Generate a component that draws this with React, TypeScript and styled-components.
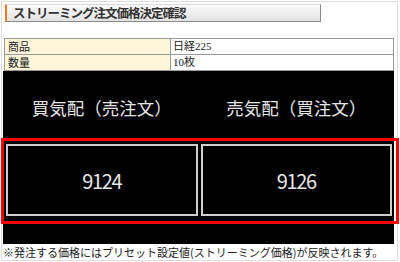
import React from "react"
import styled, { createGlobalStyle } from "styled-components"

const GlobalStyle = createGlobalStyle`
  body {
    margin: 0;
    background: #fff;
    font-family: "Noto Sans CJK JP", "Noto Sans", sans-serif;
  }
`

const Page = styled.div`
  position: relative;
  width: 400px;
  height: 262px;
  padding: 1px 0 0 1px;
  box-sizing: border-box;
`

const Frame = styled.div`
  width: 397px;
  height: 260px;
  box-sizing: border-box;
  border: 1px solid #dedede;
  display: flex;
  flex-direction: column;
`

const TitleBar = styled.div`
  margin: 2px 0 0 3px;
  width: 316px;
  height: 18px;
  box-sizing: border-box;
  border-left: 2px solid #f07a22;
  border-top: 1px solid #d8d8d8;
  border-right: 1px solid #8a8a8a;
  border-bottom: 1px solid #8a8a8a;
  background: linear-gradient(#fbfbfb, #e2e2e2);
  padding-left: 6px;
  font-size: 12.5px;
  font-weight: bold;
  letter-spacing: -1px;
  line-height: 16px;
  color: #333;
`

const InfoTable = styled.table`
  margin: 16px 0 0 2px;
  width: 390px;
  border-collapse: collapse;
  font-size: 11px;
  color: #222;
`

const LabelCell = styled.td`
  width: 162px;
  height: 15px;
  padding: 0 0 0 3px;
  border: 1px solid #999;
  background: #fdf6d8;
  line-height: 15px;
`

const ValueCell = styled.td`
  height: 15px;
  padding: 0 0 0 2px;
  border: 1px solid #999;
  background: #fff;
  line-height: 15px;
  font-family: "Liberation Serif", "Noto Sans CJK JP", serif;
`

const QuotePanel = styled.div`
  margin-left: 1px;
  width: 391px;
  height: 173px;
  background: #000;
  padding: 0 2px 0 3px;
  box-sizing: border-box;
  display: grid;
  grid-template-columns: 1fr 1fr;
  grid-template-rows: 73px 72px;
  column-gap: 3px;
`

const SideHeader = styled.div`
  display: flex;
  align-items: center;
  justify-content: center;
  color: #e6e6e6;
  font-size: 17.5px;
`

const PriceBox = styled.div`
  border: 2px solid #cfcfcf;
  display: flex;
  align-items: center;
  justify-content: center;
  color: #e6e6e6;
  font-size: 20px;
  letter-spacing: -1.4px;
`

const Note = styled.div`
  padding-left: 1px;
  font-size: 11px;
  line-height: 16px;
  color: #222;
  white-space: nowrap;
`

const Highlight = styled.div`
  position: absolute;
  left: 1px;
  top: 138px;
  width: 398px;
  height: 86px;
  box-sizing: border-box;
  border: 3px solid #ff0000;
  pointer-events: none;
`

const App: React.FC = () => {
  return (
    <Page>
      <GlobalStyle />
      <Frame>
        <TitleBar>ストリーミング注文価格決定確認</TitleBar>
        <InfoTable>
          <tbody>
            <tr>
              <LabelCell>商品</LabelCell>
              <ValueCell>日経225</ValueCell>
            </tr>
            <tr>
              <LabelCell>数量</LabelCell>
              <ValueCell>10枚</ValueCell>
            </tr>
          </tbody>
        </InfoTable>
        <QuotePanel>
          <SideHeader>買気配（売注文）</SideHeader>
          <SideHeader>売気配（買注文）</SideHeader>
          <PriceBox>9124</PriceBox>
          <PriceBox>9126</PriceBox>
        </QuotePanel>
        <Note>※発注する価格にはプリセット設定値(ストリーミング価格)が反映されます。</Note>
      </Frame>
      <Highlight />
    </Page>
  )
}

export default App
